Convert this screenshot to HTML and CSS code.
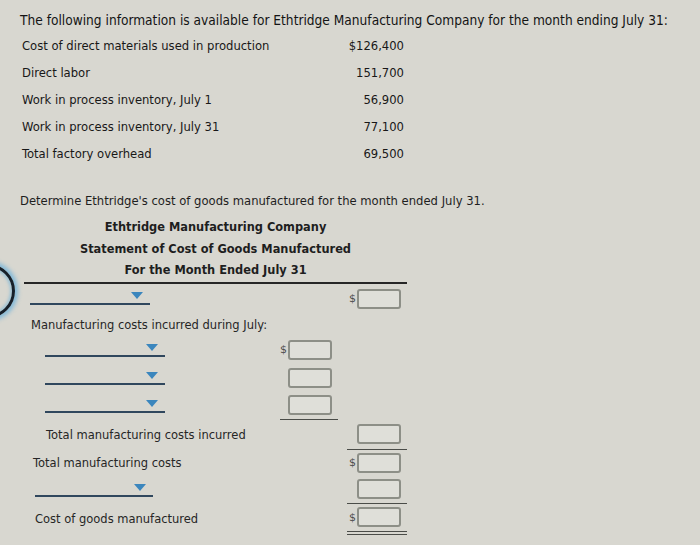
FILE: index.html
```html
<!DOCTYPE html>
<html>
<head>
<meta charset="utf-8">
<link rel="stylesheet" href="styles.css">
</head>
<body>
<div class="page">
  <p class="intro">The following information is available for Ethtridge Manufacturing Company for the month ending July 31:</p>
  <div class="facts">
    <span>Cost of direct materials used in production</span><span class="amt">$126,400</span>
    <span>Direct labor</span><span class="amt">151,700</span>
    <span>Work in process inventory, July 1</span><span class="amt">56,900</span>
    <span>Work in process inventory, July 31</span><span class="amt">77,100</span>
    <span>Total factory overhead</span><span class="amt">69,500</span>
  </div>
  <p class="prompt">Determine Ethtridge's cost of goods manufactured for the month ended July 31.</p>

  <div class="statement">
    <div class="heads">
      <div>Ethtridge Manufacturing Company</div>
      <div>Statement of Cost of Goods Manufactured</div>
      <div>For the Month Ended July 31</div>
    </div>

    <div class="row r1">
      <div class="lab"><div class="dd in6"><svg class="tri" viewBox="0 0 12 7"><polygon points="0,0 12,0 6,7"/></svg></div></div>
      <div class="cell"></div>
      <div class="cell"><span class="cur">$</span><span class="box"></span></div>
    </div>

    <div class="row r2">
      <div class="lab txt in7">Manufacturing costs incurred during July:</div>
      <div class="cell"></div>
      <div class="cell"></div>
    </div>

    <div class="row">
      <div class="lab"><div class="dd in21"><svg class="tri" viewBox="0 0 12 7"><polygon points="0,0 12,0 6,7"/></svg></div></div>
      <div class="cell b"><span class="cur">$</span><span class="box"></span></div>
      <div class="cell"></div>
    </div>

    <div class="row">
      <div class="lab"><div class="dd in21"><svg class="tri" viewBox="0 0 12 7"><polygon points="0,0 12,0 6,7"/></svg></div></div>
      <div class="cell b"><span class="cur"></span><span class="box"></span></div>
      <div class="cell"></div>
    </div>

    <div class="row">
      <div class="lab"><div class="dd in21"><svg class="tri" viewBox="0 0 12 7"><polygon points="0,0 12,0 6,7"/></svg></div></div>
      <div class="cell b ul"><span class="cur"></span><span class="box"></span></div>
      <div class="cell"></div>
    </div>

    <div class="row r6">
      <div class="lab txt in22">Total manufacturing costs incurred</div>
      <div class="cell"></div>
      <div class="cell ul"><span class="cur"></span><span class="box"></span></div>
    </div>

    <div class="row r7">
      <div class="lab txt in9">Total manufacturing costs</div>
      <div class="cell"></div>
      <div class="cell"><span class="cur">$</span><span class="box"></span></div>
    </div>

    <div class="row">
      <div class="lab"><div class="dd in11 w118"><svg class="tri" viewBox="0 0 12 7"><polygon points="0,0 12,0 6,7"/></svg></div></div>
      <div class="cell"></div>
      <div class="cell ul"><span class="cur"></span><span class="box"></span></div>
    </div>

    <div class="row r9">
      <div class="lab txt in11">Cost of goods manufactured</div>
      <div class="cell"></div>
      <div class="cell dbl"><span class="cur">$</span><span class="box"></span></div>
    </div>
  </div>
</div>
<div class="focus-ring"></div>
</body>
</html>
```

FILE: styles.css
```css
html, body {
  margin: 0;
  padding: 0;
}
body {
  width: 700px;
  height: 545px;
  overflow: hidden;
  background: #d8d7d0;
  color: #222;
  font-family: "DejaVu Sans", Verdana, sans-serif;
  position: relative;
}
.page {
  padding: 12px 0 0 20px;
}
.intro {
  margin: 0;
  font-family: "DejaVu Sans Condensed", "DejaVu Sans", sans-serif;
  font-stretch: condensed;
  font-size: 13.6px;
  line-height: 16px;
  color: #141414;
}
.facts {
  margin: 4px 0 0 2px;
  display: grid;
  grid-template-columns: 300px 82px;
  grid-auto-rows: 27px;
  align-items: center;
  font-family: "DejaVu Sans Condensed", "DejaVu Sans", sans-serif;
  font-stretch: condensed;
  font-size: 12.9px;
  color: #181818;
}
.amt {
  text-align: right;
}
.prompt {
  margin: 26px 0 0 0;
  font-size: 11.6px;
  line-height: 16px;
  color: #1e1e1e;
}
.statement {
  margin: 8px 0 0 4px;
  width: 383px;
  font-size: 11.5px;
  color: #262626;
}
.heads {
  text-align: center;
  font-weight: bold;
  font-size: 11.4px;
  line-height: 21.5px;
  border-bottom: 2px solid #262626;
  color: #1e1e1e;
}
.row {
  display: grid;
  grid-template-columns: 247px 58px 60px;
  column-gap: 9px;
  height: 28px;
}
.r1 { height: 30px; }
.r2 { height: 22px; }
.r6 { height: 30px; }
.r7 { height: 26px; }
.r9 { height: 31px; }
.lab {
  display: flex;
  align-items: flex-start;
}
.lab.txt {
  align-items: center;
  white-space: nowrap;
}
.in6 { margin-left: 6px; }
.in7 { padding-left: 7px; }
.in9 { padding-left: 9px; }
.in11 { margin-left: 11px; padding-left: 11px; }
.lab.in11 { margin-left: 0; }
.dd.in11 { padding-left: 0; }
.in21 { margin-left: 21px; }
.in22 { padding-left: 22px; }
.dd {
  position: relative;
  width: 120px;
  height: 19px;
  border-bottom: 2px solid #30475d;
  flex: none;
}
.dd.w118 { width: 118px; }
.tri {
  position: absolute;
  right: 7px;
  top: 8px;
  width: 12px;
  height: 7px;
  fill: #3b86bd;
}
.cell {
  display: flex;
  align-items: center;
  box-sizing: border-box;
}
.cell.b { padding-left: 0; }
.cell:not(.b) { padding-left: 2px; }
.cell.ul { border-bottom: 1px solid #4a4c48; }
.cell.dbl { border-bottom: 4px double #4a4c48; }
.cur {
  display: inline-block;
  width: 8px;
  font-size: 11px;
  color: #4e4e4e;
  text-align: left;
}
.box {
  display: inline-block;
  width: 44px;
  height: 20px;
  box-sizing: border-box;
  border: 2px solid #8d8f87;
  border-radius: 3px;
  background: #dfdfd9;
}
.focus-ring {
  position: absolute;
  left: -39px;
  top: 264px;
  width: 54px;
  height: 54px;
  box-sizing: border-box;
  border: 3px solid #16202a;
  border-radius: 50%;
  box-shadow: 0 0 4px 3px rgba(100, 175, 220, 0.75), inset 0 0 3px 2px rgba(100, 175, 220, 0.5);
}
```
